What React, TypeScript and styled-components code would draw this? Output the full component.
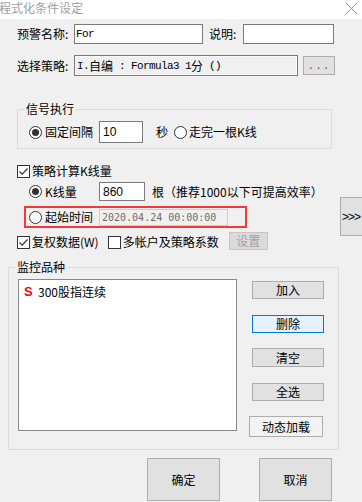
import React from 'react';
import styled, { createGlobalStyle } from 'styled-components';

const GlobalStyle = createGlobalStyle`
  html, body { margin: 0; padding: 0; background: #f0f0f0; }
  body {
    font-family: "Noto Sans CJK SC", "Noto Sans", sans-serif;
    font-size: 12px;
    color: #000;
  }
  * { box-sizing: border-box; }
`;

const Window = styled.div`
  width: 362px;
  height: 502px;
  background: #f0f0f0;
  display: flex;
  flex-direction: column;
`;

const TitleBar = styled.div`
  height: 19px;
  width: 362px;
  flex-shrink: 0;
  background: #fff;
  display: flex;
  align-items: flex-start;
`;

const Title = styled.div`
  margin-left: -1px;
  font-size: 12px;
  line-height: 16px;
  color: #a0a0a0;
  white-space: nowrap;
  flex: 1;
`;

const CloseButton = styled.div`
  width: 11px;
  height: 11px;
  margin: 3px 5px 0 0;
  flex-shrink: 0;
  background:
    linear-gradient(45deg, transparent 46%, #8c8c8c 46%, #8c8c8c 54%, transparent 54%),
    linear-gradient(-45deg, transparent 46%, #8c8c8c 46%, #8c8c8c 54%, transparent 54%);
`;

const Body = styled.div`
  width: 362px;
  height: 483px;
  overflow: hidden;
  padding-left: 17px;
  display: flex;
  flex-direction: column;
`;

const FormRow = styled.div<{ $mt: number; $h: number; $ml?: number }>`
  display: flex;
  align-items: center;
  margin-top: ${(p) => p.$mt}px;
  margin-left: ${(p) => p.$ml ?? 0}px;
  height: ${(p) => p.$h}px;
  white-space: nowrap;
`;

const Text = styled.span<{ $w?: number; $ml?: number; $color?: string }>`
  display: inline-block;
  ${(p) => (p.$w ? `width: ${p.$w}px;` : '')}
  margin-left: ${(p) => p.$ml ?? 0}px;
  line-height: 16px;
  white-space: nowrap;
  flex-shrink: 0;
  color: ${(p) => p.$color ?? '#000'};
`;

const TextBox = styled.div<{ $w: number; $h: number; $ml?: number; $pl?: number; $readonly?: boolean }>`
  width: ${(p) => p.$w}px;
  height: ${(p) => p.$h}px;
  margin-left: ${(p) => p.$ml ?? 0}px;
  padding-left: ${(p) => p.$pl ?? 1}px;
  border: 1px solid #7a7a7a;
  background: ${(p) => (p.$readonly ? '#f0f0f0' : '#fff')};
  box-shadow: ${(p) => (p.$readonly ? 'inset 0 0 0 1px #fafafa' : 'none')};
  display: flex;
  align-items: center;
  flex-shrink: 0;
  overflow: hidden;
  white-space: nowrap;
  font-family: "Liberation Mono", "Noto Sans CJK SC", monospace;
  font-size: 11px;
  letter-spacing: -0.6px;
`;

const Han = styled.span`
  font-family: "Noto Sans CJK SC", sans-serif;
  font-size: 12px;
  letter-spacing: 0;
`;

const NumberBox = styled.div<{ $w: number; $h: number; $ml?: number }>`
  width: ${(p) => p.$w}px;
  height: ${(p) => p.$h}px;
  margin-left: ${(p) => p.$ml ?? 0}px;
  border: 1px solid #7a7a7a;
  background: #fff;
  padding-left: 3px;
  display: flex;
  align-items: center;
  flex-shrink: 0;
  font-family: "Liberation Sans", Arial, sans-serif;
  font-size: 12px;
`;

const DateBox = styled.div`
  width: 129px;
  height: 17px;
  border: 1px solid #cfcfcf;
  background: #f0f0f0;
  padding-left: 2px;
  display: flex;
  align-items: center;
  flex-shrink: 0;
  font-family: "DejaVu Sans Mono", monospace;
  font-size: 10px;
  color: #6d6d6d;
`;

type BtnVariant = 'normal' | 'focused' | 'disabled' | 'plain';

const PushButton = styled.button<{ $w: number; $h: number; $ml?: number; $mt?: number; $variant?: BtnVariant }>`
  width: ${(p) => p.$w}px;
  height: ${(p) => p.$h}px;
  margin: ${(p) => p.$mt ?? 0}px 0 0 ${(p) => p.$ml ?? 0}px;
  padding: 0;
  flex-shrink: 0;
  align-self: flex-start;
  border: 1px solid
    ${(p) => (p.$variant === 'focused' ? '#0078d7' : p.$variant === 'disabled' ? '#c6c6c6' : '#adadad')};
  background: ${(p) =>
    p.$variant === 'focused'
      ? '#e5f1fb'
      : p.$variant === 'disabled'
      ? '#dadada'
      : p.$variant === 'plain'
      ? '#f3f3f3'
      : '#e1e1e1'};
  color: ${(p) => (p.$variant === 'disabled' ? '#a3a3a3' : '#000')};
  font-family: "Noto Sans CJK SC", sans-serif;
  font-size: 12px;
  line-height: 1;
  display: flex;
  align-items: center;
  justify-content: center;
  white-space: nowrap;
`;

const DotsLabel = styled.span`
  font-family: "Liberation Mono", monospace;
  font-size: 11px;
  color: #555;
  letter-spacing: 1px;
  margin-top: 2px;
`;

const RadioCircle = styled.span<{ $checked?: boolean; $ml?: number }>`
  width: 13px;
  height: 13px;
  margin-left: ${(p) => p.$ml ?? 0}px;
  border-radius: 50%;
  border: 1px solid #333;
  background: #fff;
  display: inline-flex;
  align-items: center;
  justify-content: center;
  flex-shrink: 0;
  &::after {
    content: '';
    width: 7px;
    height: 7px;
    border-radius: 50%;
    background: #333;
    display: ${(p) => (p.$checked ? 'block' : 'none')};
  }
`;

const CheckBoxBox = styled.span<{ $ml?: number }>`
  width: 13px;
  height: 13px;
  margin-left: ${(p) => p.$ml ?? 0}px;
  border: 1px solid #333;
  background: #fff;
  display: inline-flex;
  align-items: center;
  justify-content: center;
  flex-shrink: 0;
`;

const CheckBox: React.FC<{ checked?: boolean; ml?: number }> = ({ checked, ml }) => (
  <CheckBoxBox $ml={ml}>
    {checked && (
      <svg width="11" height="11" viewBox="0 0 11 11">
        <path d="M1.5 5.5 L4.2 8.2 L9.5 2.5" fill="none" stroke="#333" strokeWidth="1.2" />
      </svg>
    )}
  </CheckBoxBox>
);

const GroupBox = styled.fieldset<{ $w: number; $mt: number; $ml?: number; $pt: number; $pb: number }>`
  margin: ${(p) => p.$mt}px 0 0 ${(p) => p.$ml ?? 0}px;
  width: ${(p) => p.$w}px;
  min-inline-size: 0;
  border: 1px solid #dcdcdc;
  padding: ${(p) => p.$pt}px 0 ${(p) => p.$pb}px 6px;
`;

const GroupLegend = styled.legend`
  padding: 0 2px;
  font-size: 12px;
  line-height: 16px;
`;

const MidRow = styled.div`
  display: flex;
  align-items: flex-start;
  margin-top: 4px;
`;

const LeftColumn = styled.div`
  width: 323px;
  flex-shrink: 0;
  display: flex;
  flex-direction: column;
`;

const MoreButton = styled.button`
  width: 24px;
  height: 39px;
  margin-top: 15px;
  padding: 0 0 0 1px;
  flex-shrink: 0;
  border: 1px solid #adadad;
  background: #e1e1e1;
  font-family: "Liberation Sans", Arial, sans-serif;
  font-size: 12px;
  color: #000;
  text-align: left;
  letter-spacing: -1px;
`;

const Highlight = styled.div`
  margin: 5px 0 0 7px;
  width: 223px;
  height: 22px;
  border: 2px solid #f23a3a;
  padding-left: 3px;
  display: flex;
  align-items: center;
  white-space: nowrap;
`;

const WatchArea = styled.div`
  display: flex;
  align-items: flex-start;
`;

const ListBox = styled.div`
  margin-left: 3px;
  width: 219px;
  height: 152px;
  border: 1px solid #828790;
  background: #fff;
  padding: 3px 0 0 4px;
  flex-shrink: 0;
`;

const ListItem = styled.div`
  display: flex;
  align-items: center;
  height: 16px;
`;

const SymbolMark = styled.span`
  font-family: "Liberation Sans", Arial, sans-serif;
  font-weight: bold;
  font-size: 13px;
  color: #ff0000;
  width: 14px;
  margin-left: 1px;
`;

const SideButtons = styled.div`
  margin: 2px 0 0 12px;
  height: 156px;
  width: 76px;
  display: flex;
  flex-direction: column;
  justify-content: space-between;
  align-items: flex-start;
`;

const FooterRow = styled.div`
  display: flex;
  justify-content: flex-end;
  gap: 39px;
  margin-top: 8px;
  padding-right: 30px;
`;

export default function App() {
  return (
    <>
      <GlobalStyle />
      <Window>
        <TitleBar>
          <Title>程式化条件设定</Title>
          <CloseButton aria-label="关闭" />
        </TitleBar>
        <Body>
          <FormRow $mt={5} $h={20}>
            <Text $w={57}>预警名称:</Text>
            <TextBox $w={129} $h={20}>For</TextBox>
            <Text $w={34} $ml={6}>说明:</Text>
            <TextBox $w={91} $h={20} />
          </FormRow>
          <FormRow $mt={11} $h={21}>
            <Text $w={57}>选择策略:</Text>
            <TextBox $w={224} $h={21} $pl={2} $readonly>
              I.<Han>自编</Han>&nbsp;:&nbsp;Formula3&nbsp;1<Han>分</Han>&nbsp;()
            </TextBox>
            <PushButton $w={32} $h={19} $ml={5} $mt={1}>
              <DotsLabel>...</DotsLabel>
            </PushButton>
          </FormRow>

          <GroupBox $w={315} $mt={25} $pt={4} $pb={5}>
            <GroupLegend>信号执行</GroupLegend>
            <FormRow $mt={0} $h={22}>
              <RadioCircle $checked $ml={5} />
              <Text $w={54} $ml={3}>固定间隔</Text>
              <NumberBox $w={44} $h={22}>10</NumberBox>
              <Text $ml={13}>秒</Text>
              <RadioCircle $ml={6} />
              <Text $ml={2}>走完一根K线</Text>
            </FormRow>
          </GroupBox>

          <FormRow $mt={15} $h={14}>
            <CheckBox checked />
            <Text $ml={2}>策略计算K线量</Text>
          </FormRow>

          <MidRow>
            <LeftColumn>
              <FormRow $mt={0} $h={19}>
                <RadioCircle $checked $ml={12} />
                <Text $w={54} $ml={3}>K线量</Text>
                <NumberBox $w={46} $h={19}>860</NumberBox>
                <Text $ml={7}>根（推荐1000以下可提高效率）</Text>
              </FormRow>
              <Highlight>
                <RadioCircle />
                <Text $w={54} $ml={3}>起始时间</Text>
                <DateBox>2020.04.24 00:00:00</DateBox>
              </Highlight>
              <FormRow $mt={4} $h={20}>
                <CheckBox checked />
                <Text $ml={2}>复权数据(W)</Text>
                <CheckBox ml={9} />
                <Text $ml={2}>多帐户及策略系数</Text>
                <PushButton $w={39} $h={18} $ml={10} $variant="disabled">设置</PushButton>
              </FormRow>
            </LeftColumn>
            <MoreButton>&gt;&gt;&gt;</MoreButton>
          </MidRow>

          <GroupBox $w={331} $ml={-9} $mt={7} $pt={4} $pb={12}>
            <GroupLegend>监控品种</GroupLegend>
            <WatchArea>
              <ListBox>
                <ListItem>
                  <SymbolMark>S</SymbolMark>
                  <span>300股指连续</span>
                </ListItem>
              </ListBox>
              <SideButtons>
                <PushButton $w={72} $h={18} $ml={3}>加入</PushButton>
                <PushButton $w={72} $h={18} $ml={3} $variant="focused">删除</PushButton>
                <PushButton $w={72} $h={19} $ml={3}>清空</PushButton>
                <PushButton $w={72} $h={18} $ml={3}>全选</PushButton>
                <PushButton $w={74} $h={21} $variant="plain">动态加载</PushButton>
              </SideButtons>
            </WatchArea>
          </GroupBox>

          <FooterRow>
            <PushButton $w={73} $h={43}>确定</PushButton>
            <PushButton $w={73} $h={43}>取消</PushButton>
          </FooterRow>
        </Body>
      </Window>
    </>
  );
}
